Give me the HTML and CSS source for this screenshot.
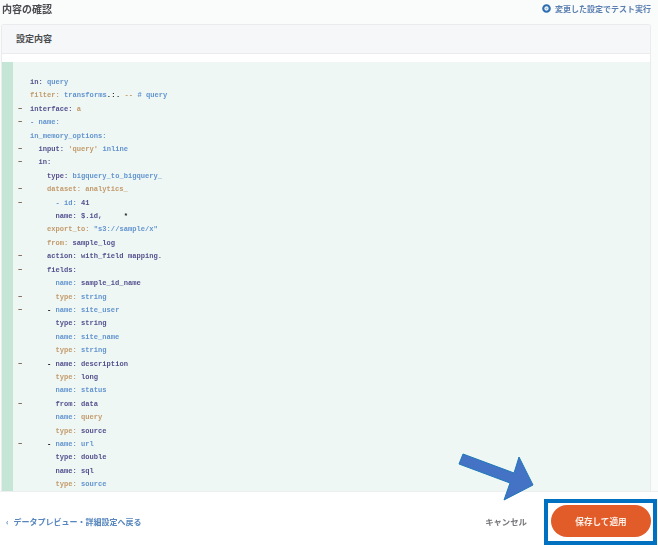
FILE: index.html
```html
<!DOCTYPE html>
<html lang="ja">
<head>
<meta charset="utf-8">
<title>内容の確認</title>
<link rel="stylesheet" href="styles.css">
</head>
<body>
<div class="page">
  <header class="top">
    <h1 class="title">内容の確認</h1>
    <a class="run">
      <svg class="run-icon" viewBox="0 0 10 10"><circle cx="5" cy="5" r="3.6" fill="none" stroke="#2f6fb0" stroke-width="2.4"/><circle cx="5" cy="5" r="1.2" fill="#9fc0de"/></svg>
      <span>変更した設定でテスト実行</span>
    </a>
  </header>
  <section class="card">
    <h2 class="card-head">設定内容</h2>
    <div class="code">
      <div class="line"><i></i><code class="l0"><b>in:</b> <u>query</u></code></div>
      <div class="line"><i></i><code class="l0"><em>filter:</em> <u>transforms</u><strong>.&#8202;:&#8202;.</strong> <em>--</em> <u># query</u></code></div>
      <div class="line"><i>−</i><code class="l0"><b>interface:</b> <em>a</em></code></div>
      <div class="line"><i>−</i><code class="l0"><u>- name:</u></code></div>
      <div class="line"><i></i><code class="l0"><u>in_memory_options:</u></code></div>
      <div class="line"><i>−</i><code class="l1"><b>input:</b> <em>'query'</em> <u>inline</u></code></div>
      <div class="line"><i>−</i><code class="l1"><b>in:</b></code></div>
      <div class="line"><i></i><code class="l2"><b>type:</b> <u>bigquery_to_bigquery_</u></code></div>
      <div class="line"><i>−</i><code class="l2"><em>dataset: analytics_</em></code></div>
      <div class="line"><i>−</i><code class="l3"><u>- id:</u> <b>41</b></code></div>
      <div class="line"><i></i><code class="l3"><b>name: $.id,</b>     <strong>*</strong></code></div>
      <div class="line"><i></i><code class="l2"><em>export_to:</em> <u>"s3://sample/x"</u></code></div>
      <div class="line"><i></i><code class="l2"><em>from:</em> <b>sample_log</b></code></div>
      <div class="line"><i>−</i><code class="l2"><b>action: with_field mapping.</b></code></div>
      <div class="line"><i>−</i><code class="l2"><b>fields:</b></code></div>
      <div class="line"><i></i><code class="l3"><u>name:</u> <b>sample_id_name</b></code></div>
      <div class="line"><i>−</i><code class="l3"><em>type:</em> <u>string</u></code></div>
      <div class="line"><i>−</i><code class="l2"><strong>-</strong> <u>name: site_user</u></code></div>
      <div class="line"><i></i><code class="l3"><b>type: string</b></code></div>
      <div class="line"><i></i><code class="l3"><u>name: site_name</u></code></div>
      <div class="line"><i></i><code class="l3"><em>type:</em> <u>string</u></code></div>
      <div class="line"><i>−</i><code class="l2"><strong>-</strong> <b>name: description</b></code></div>
      <div class="line"><i></i><code class="l3"><em>type:</em> <b>long</b></code></div>
      <div class="line"><i></i><code class="l3"><u>name: status</u></code></div>
      <div class="line"><i>−</i><code class="l3"><b>from: data</b></code></div>
      <div class="line"><i></i><code class="l3"><u>name:</u> <em>query</em></code></div>
      <div class="line"><i></i><code class="l3"><em>type:</em> <b>source</b></code></div>
      <div class="line"><i>−</i><code class="l2"><strong>-</strong> <u>name: url</u></code></div>
      <div class="line"><i></i><code class="l3"><b>type: double</b></code></div>
      <div class="line"><i></i><code class="l3"><b>name: sql</b></code></div>
      <div class="line"><i></i><code class="l3"><em>type:</em> <u>source</u></code></div>
    </div>
  </section>
  <footer class="foot">
    <a class="back">‹ <span>データプレビュー・詳細設定へ戻る</span></a>
    <a class="cancel">キャンセル</a>
    <button class="save">保存して適用</button>
  </footer>
  <svg class="arrow" viewBox="0 0 658 549"><polygon points="463,454 459,464 510,483 504,500 533,485 519,457 514,473" fill="#4472c4" stroke="#1f78b8" stroke-width="1"/></svg>
  <div class="mark"></div>
</div>
</body>
</html>
```
FILE: styles.css
```css
* { box-sizing: border-box; }
html, body { margin: 0; padding: 0; }
body { background: #fff; font-family: "Noto Sans CJK JP", "Noto Sans", sans-serif; }
.page { position: relative; width: 658px; height: 549px; overflow: hidden; display: flex; flex-direction: column; background: #fafbfb; }
.top { height: 24px; flex: none; display: flex; align-items: flex-start; justify-content: space-between; padding: 0 7px 0 2px; }
.title { margin: 0; font-size: 10px; line-height: 17px; font-weight: 700; color: #4a4d50; filter: blur(.4px); }
.run { display: flex; align-items: center; gap: 4px; height: 17px; font-size: 8px; font-weight: 700; color: #5a7fb0; filter: blur(.4px); }
.run-icon { width: 9px; height: 9px; }
.card { flex: 1; min-height: 0; margin: 0 7px 0 1px; border: 1px solid #e9ebec; border-bottom: 0; border-radius: 3px 3px 0 0; background: #fff; display: flex; flex-direction: column; overflow: hidden; }
.card-head { margin: 0; flex: none; height: 29px; padding-left: 14px; font-size: 9px; line-height: 27px; font-weight: 700; color: #4a4d50; background: #f6f7f8; border-bottom: 1px solid #e9ebec; }
.code { flex: 1; min-height: 0; margin-top: 8px; padding-top: 14px; overflow: hidden; background: linear-gradient(to right, #c5e6d7 11px, #eef7f3 11px); filter: blur(.6px); font-family: "Liberation Mono", monospace; font-size: 7.1px; }
.line { display: flex; height: 13.42px; line-height: 13.42px; white-space: pre; }
.line i { width: 28px; flex: none; padding-left: 16px; font-style: normal; color: #6a4a38; font-weight: 700; }
.line code { font-family: inherit; font-weight: 700; }
.l1 { padding-left: 8.5px; }
.l2 { padding-left: 17px; }
.l3 { padding-left: 25.5px; }
.line b { color: #55508f; }
.line em { font-style: normal; color: #c39a6c; font-weight: 700; }
.line u { text-decoration: none; color: #6394d0; font-weight: 700; }
.line strong { color: #111; }
.foot { flex: none; height: 58px; display: flex; align-items: center; padding: 1px 7px 0 6px; background: #fff; border-top: 1px solid #eceeef; }
.back { font-size: 8px; font-weight: 700; color: #5686bd; margin-right: auto; filter: blur(.4px); display: flex; gap: 5px; align-items: center; }
.cancel { font-size: 8.4px; font-weight: 700; color: #75777a; margin-right: 24px; filter: blur(.4px); }
.save { width: 100px; height: 32px; border: 0; padding: 0; border-radius: 16px; background: #e25c2a; color: #fdeee6; font-family: inherit; font-size: 8.6px; font-weight: 700; filter: blur(.3px); }
.arrow { position: absolute; inset: 0; width: 658px; height: 549px; pointer-events: none; }
.mark { position: absolute; left: 544px; top: 499px; width: 113px; height: 46px; border: 4px solid #0070c0; }
```
